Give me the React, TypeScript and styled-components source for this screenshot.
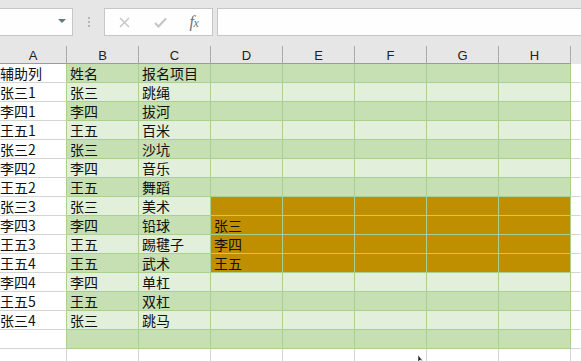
import React from "react";
import styled, { createGlobalStyle } from "styled-components";

const Global = createGlobalStyle`
  html, body { margin: 0; padding: 0; background: #ffffff; overflow: hidden; }
  body { font-family: "Noto Sans CJK SC", "Liberation Sans", sans-serif; }
`;

const Page = styled.div`
  position: relative;
  width: 581px;
  height: 361px;
  overflow: hidden;
  background: #ffffff;
`;

const Toolbar = styled.div`
  display: flex;
  align-items: flex-start;
  height: 36px;
  background: #e6e6e6;
  padding-top: 8px;
  box-sizing: border-box;
`;

const NameBox = styled.div`
  width: 74px;
  height: 28px;
  margin-left: -1px;
  box-sizing: border-box;
  border: 1px solid #c6c6c6;
  background: #fefefe;
  display: flex;
  align-items: center;
  justify-content: flex-end;
  padding-right: 6px;
`;

const Arrow = styled.div`
  width: 0;
  height: 0;
  border-left: 4px solid transparent;
  border-right: 4px solid transparent;
  border-top: 4px solid #5f7a84;
  margin-top: -2px;
`;

const Grip = styled.div`
  width: 31px;
  height: 28px;
  display: flex;
  flex-direction: column;
  align-items: center;
  justify-content: center;
  gap: 2px;
  span {
    width: 2px;
    height: 2px;
    background: #b5b5b5;
  }
`;

const FxBox = styled.div`
  width: 109px;
  height: 28px;
  box-sizing: border-box;
  border: 1px solid #c6c6c6;
  background: #fefefe;
  display: flex;
  align-items: center;
`;

const FxButton = styled.div<{ $w: number }>`
  width: ${(p) => p.$w}px;
  height: 26px;
  display: flex;
  align-items: center;
  justify-content: center;
`;

const FxText = styled.span`
  font-family: "Liberation Serif", serif;
  font-style: italic;
  font-size: 16px;
  color: #68737a;
  letter-spacing: -0.5px;
  margin-top: -1px;
  span { font-size: 12px; }
`;

const Formula = styled.div`
  flex: 1;
  height: 28px;
  margin-left: 4px;
  box-sizing: border-box;
  border: 1px solid #c6c6c6;
  border-right: none;
  background: #fefefe;
`;

const HeaderStrip = styled.div`
  height: 28px;
  background: #e6e6e6;
  padding-top: 10px;
  box-sizing: border-box;
  display: flex;
`;

const HeadCell = styled.div<{ $w: number; $last?: boolean }>`
  width: ${(p) => p.$w}px;
  height: 18px;
  box-sizing: border-box;
  border-right: ${(p) => (p.$last ? "none" : "1px solid #ababab")};
  border-bottom: ${(p) => (p.$last ? "none" : "1px solid #9b9b9b")};
  display: flex;
  align-items: center;
  justify-content: center;
  font-family: "Liberation Sans", sans-serif;
  font-size: 13px;
  color: #222;
  padding-top: 1px;
`;

const Grid = styled.div`
  display: grid;
  grid-template-columns: 67px repeat(7, 72px) 10px;
  grid-auto-rows: 19px;
`;

type Kind = "plain" | "dark" | "light" | "gold" | "blank";

const bgOf: Record<Kind, string> = {
  plain: "#ffffff",
  dark: "#c6e0b4",
  light: "#e2efda",
  gold: "#bf8f00",
  blank: "#ffffff",
};

const Cell = styled.div<{ $kind: Kind; $rb: string; $bb: string }>`
  box-sizing: border-box;
  background: ${(p) => bgOf[p.$kind]};
  border-right: 1px solid ${(p) => p.$rb};
  border-bottom: 1px solid ${(p) => p.$bb};
  font-size: 14px;
  line-height: 18px;
  color: #111;
  padding-left: 3px;
  white-space: nowrap;
  overflow: visible;
  font-family: "Noto Sans CJK SC", "Liberation Sans", sans-serif;
`;

const ACell = styled(Cell)`
  padding-left: 0;
`;

const Cursor = styled.svg`
  position: absolute;
  left: 417px;
  top: 355px;
`;

const rows: [string, string, string, string?][] = [
  ["辅助列", "姓名", "报名项目"],
  ["张三1", "张三", "跳绳"],
  ["李四1", "李四", "拔河"],
  ["王五1", "王五", "百米"],
  ["张三2", "张三", "沙坑"],
  ["李四2", "李四", "音乐"],
  ["王五2", "王五", "舞蹈"],
  ["张三3", "张三", "美术", ""],
  ["李四3", "李四", "铅球", "张三"],
  ["王五3", "王五", "踢毽子", "李四"],
  ["王五4", "王五", "武术", "王五"],
  ["李四4", "李四", "单杠"],
  ["王五5", "王五", "双杠"],
  ["张三4", "张三", "跳马"],
  ["", "", ""],
];

const GREEN = "#a9d08e";
const GRAY = "#d4d4d4";

const cols = ["A", "B", "C", "D", "E", "F", "G", "H"];
const widths = [67, 72, 72, 72, 72, 72, 72, 72, 10];

export default function App() {
  const cells: React.ReactNode[] = [];
  rows.forEach((r, ri) => {
    const band: Kind = ri % 2 === 0 ? "dark" : "light";
    const isGold = ri >= 7 && ri <= 10;
    cells.push(
      <ACell key={`a${ri}`} $kind="plain" $rb={GREEN} $bb={GRAY}>
        {r[0]}
      </ACell>
    );
    for (let c = 1; c <= 7; c++) {
      let text = "";
      if (c === 1) text = r[1];
      if (c === 2) text = r[2];
      if (c === 3 && r[3]) text = r[3];
      const kind: Kind = isGold && c >= 3 ? "gold" : band;
      cells.push(
        <Cell key={`${ri}-${c}`} $kind={kind} $rb={GREEN} $bb={GREEN}>
          {text}
        </Cell>
      );
    }
    cells.push(
      <Cell key={`z${ri}`} $kind="blank" $rb="transparent" $bb={GRAY} />
    );
  });
  for (let c = 0; c < 9; c++) {
    cells.push(
      <Cell
        key={`t${c}`}
        $kind="plain"
        $rb={c === 8 ? "transparent" : GRAY}
        $bb={GRAY}
      />
    );
  }

  return (
    <Page>
      <Global />
      <Toolbar>
        <NameBox>
          <Arrow />
        </NameBox>
        <Grip>
          <span />
          <span />
          <span />
        </Grip>
        <FxBox>
          <FxButton $w={38}>
            <svg width="11" height="11" viewBox="0 0 11 11">
              <path d="M1 1L10 10M10 1L1 10" stroke="#c4c4c4" strokeWidth="1.4" />
            </svg>
          </FxButton>
          <FxButton $w={34}>
            <svg width="13" height="11" viewBox="0 0 13 11">
              <path d="M1 6L4.5 9.5L12 1.5" stroke="#c4c4c4" strokeWidth="2" fill="none" />
            </svg>
          </FxButton>
          <FxButton $w={34}>
            <FxText>
              f<span>x</span>
            </FxText>
          </FxButton>
        </FxBox>
        <Formula />
      </Toolbar>
      <HeaderStrip>
        {cols.map((c, i) => (
          <HeadCell key={c} $w={widths[i]}>
            {c}
          </HeadCell>
        ))}
        <HeadCell $w={10} $last />
      </HeaderStrip>
      <Grid>{cells}</Grid>
      <Cursor width="8" height="8" viewBox="0 0 8 8">
        <path d="M1 0L1 7L3 5L6 6Z" fill="#222" stroke="#fff" strokeWidth="0.5" />
      </Cursor>
    </Page>
  );
}
